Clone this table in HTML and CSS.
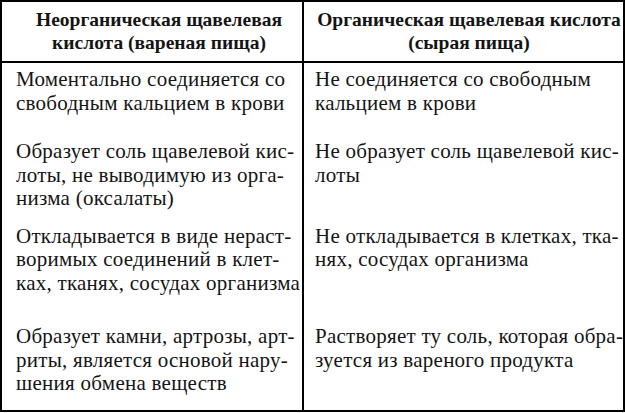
FILE: index.html
```html
<!DOCTYPE html>
<html lang="ru">
<head>
<meta charset="utf-8">
<title>Щавелевая кислота</title>
<link rel="stylesheet" href="styles.css">
</head>
<body>
<div class="cmp">
  <p class="cell head left">Неорганическая щавелевая<br>кислота (вареная пища)</p>
  <p class="cell head right">Органическая щавелевая кислота<br>(сырая пища)</p>

  <p class="cell left r1">Моментально соединяется со<br>свободным кальцием в крови</p>
  <p class="cell right r1">Не соединяется со свободным<br>кальцием в крови</p>

  <p class="cell left r2">Образует соль щавелевой кис-<br>лоты, не выводимую из орга-<br>низма (оксалаты)</p>
  <p class="cell right r2">Не образует соль щавелевой кис-<br>лоты</p>

  <p class="cell left r3">Откладывается в виде нераст-<br>воримых соединений в клет-<br>ках, тканях, сосудах организма</p>
  <p class="cell right r3">Не откладывается в клетках, тка-<br>нях, сосудах организма</p>

  <p class="cell left r4">Образует камни, артрозы, арт-<br>риты, является основой нару-<br>шения обмена веществ</p>
  <p class="cell right r4">Растворяет ту соль, которая обра-<br>зуется из вареного продукта</p>
</div>
</body>
</html>
```

FILE: styles.css
```css
body {
  margin: 0;
  font: 21px/23.5px "Liberation Serif", "Times New Roman", Tinos, serif;
}
.cmp {
  box-sizing: border-box;
  width: 625px;
  height: 412px;
  border: 2px solid #000;
  display: grid;
  grid-template-columns: 302px 319px;
  grid-template-rows: auto auto auto auto 1fr;
  color: #141414;
  font: 21px/23.5px "Liberation Serif", "Times New Roman", Tinos, serif;
}
.cell {
  margin: 0;
  box-sizing: border-box;
  white-space: nowrap;
  font: 21px/23.5px "Liberation Serif", "Times New Roman", Tinos, serif;
  letter-spacing: 0.25px;
}
.left {
  border-right: 2px solid #000;
  padding-left: 14px;
}
.right {
  padding-left: 11px;
}
.head {
  border-bottom: 2px solid #000;
  font: bold 19.5px/23px "Liberation Serif", "Times New Roman", Tinos, serif;
  letter-spacing: 0;
  text-align: center;
  padding-top: 6px;
  padding-bottom: 7px;
}
.r1 { padding-top: 5px; }
.r2 { padding-top: 25px; }
.r3 { padding-top: 14px; }
.r4 { padding-top: 30px; }
```
